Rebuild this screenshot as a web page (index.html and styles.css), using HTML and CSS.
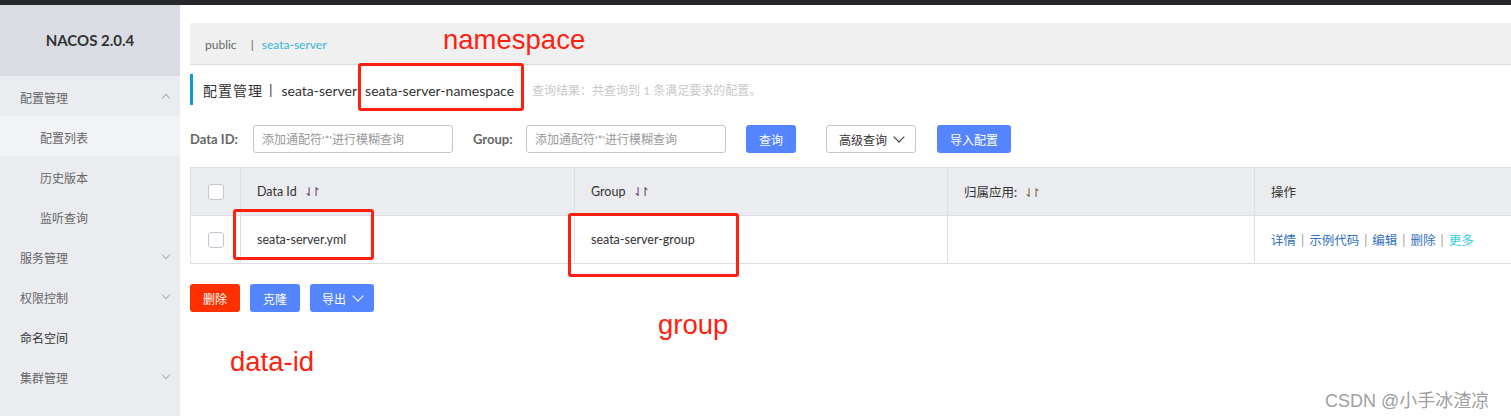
FILE: index.html
```html
<!DOCTYPE html>
<html lang="zh-CN">
<head>
    <meta charset="UTF-8">
    <title>Nacos 配置列表</title>
    <link rel="stylesheet" href="styles.css">
</head>
<body>
    <div class="topbar"></div>
    <div class="layout">
        <div class="sidebar">
            <div class="logo">NACOS 2.0.4</div>
            <ul class="menu">
                <li class="group open">配置管理<span class="arrow up"></span></li>
                <li class="sub active">配置列表</li>
                <li class="sub">历史版本</li>
                <li class="sub">监听查询</li>
                <li class="group">服务管理<span class="arrow"></span></li>
                <li class="group">权限控制<span class="arrow"></span></li>
                <li class="group plain">命名空间</li>
                <li class="group">集群管理<span class="arrow"></span></li>
            </ul>
        </div>

        <div class="main">
            <div class="ns-bar">
                <span class="ns">public</span>
                <span class="ns-sep">|</span>
                <span class="ns current">seata-server</span>
            </div>

            <div class="title-row">
                <span class="title-cn">配置管理</span>
                <span class="title-sep">|</span>
                <span class="title-en">seata-server</span>
                <span class="title-en ns-name">seata-server-namespace</span>
                <span class="result">查询结果：共查询到 1 条满足要求的配置。</span>
            </div>

            <div class="search-row">
                <label>Data ID:</label>
                <input class="field" type="text" placeholder="添加通配符'*'进行模糊查询">
                <label class="gap">Group:</label>
                <input class="field" type="text" placeholder="添加通配符'*'进行模糊查询">
                <button class="btn primary query">查询</button>
                <button class="btn normal adv">高级查询 <span class="chev"></span></button>
                <button class="btn primary import">导入配置</button>
            </div>

            <table class="grid">
                <thead>
                    <tr>
                        <th class="col-check"><span class="checkbox"></span></th>
                        <th class="col-id">Data Id <span class="sort">⇃↾</span></th>
                        <th class="col-group">Group <span class="sort">⇃↾</span></th>
                        <th class="col-app">归属应用: <span class="sort">⇃↾</span></th>
                        <th>操作</th>
                    </tr>
                </thead>
                <tbody>
                    <tr>
                        <td class="col-check"><span class="checkbox"></span></td>
                        <td>seata-server.yml</td>
                        <td>seata-server-group</td>
                        <td></td>
                        <td class="ops">
                            <a href="#">详情</a><i>|</i><a href="#">示例代码</a><i>|</i><a href="#">编辑</a><i>|</i><a href="#">删除</a><i>|</i><a href="#" class="more">更多</a>
                        </td>
                    </tr>
                </tbody>
            </table>

            <div class="batch">
                <button class="btn danger">删除</button>
                <button class="btn primary">克隆</button>
                <button class="btn primary">导出 <span class="chev light"></span></button>
            </div>
        </div>
    </div>

    <!-- 红色标注 -->
    <div class="note-text t-ns">namespace</div>
    <div class="note-box b-ns"></div>
    <div class="note-box b-id"></div>
    <div class="note-box b-group"></div>
    <div class="note-text t-group">group</div>
    <div class="note-text t-id">data-id</div>
    <div class="watermark">CSDN @小手冰渣凉</div>
</body>
</html>
```

FILE: styles.css
```css
body {
    margin: 0;
    font-family: Lato, "Noto Sans CJK SC", sans-serif;
    font-size: 12px;
    color: #333;
    background-color: #fff;
    height: 416px;
    overflow: hidden;
    position: relative;
}
.topbar {
    height: 5px;
    background-color: #25272b;
}
.layout {
    display: flex;
    height: 411px;
}
.sidebar {
    width: 180px;
    flex-shrink: 0;
    background-color: #eaecf0;
}
.logo {
    height: 71px;
    line-height: 71px;
    background-color: #d9dde3;
    text-align: center;
    font-weight: bold;
    font-size: 15px;
    color: #333;
}
.menu {
    list-style-type: none;
    margin: 0;
    padding: 0;
}
.menu li {
    height: 40px;
    line-height: 46px;
    font-size: 12px;
    color: #666;
    position: relative;
}
.menu .group {
    padding-left: 20px;
}
.menu .sub {
    padding-left: 40px;
}
.menu .active {
    background-color: #f2f3f7;
}
.menu .plain {
    color: #333;
}
.arrow {
    position: absolute;
    right: 11px;
    top: 16px;
    width: 5px;
    height: 5px;
    border-right: 1px solid #aaa;
    border-bottom: 1px solid #aaa;
    transform: rotate(45deg);
}
.arrow.up {
    top: 19px;
    transform: rotate(-135deg);
}
.main {
    flex: 1;
    padding: 18px 0 0 10px;
    min-width: 0;
}
.ns-bar {
    height: 41px;
    line-height: 44px;
    background-color: #f0f0f0;
    border-bottom: 1px solid #dcdcdc;
    padding-left: 15px;
    font-size: 12px;
}
.ns {
    color: #666;
}
.ns-sep {
    color: #666;
    margin: 0 5px 0 11px;
}
.ns.current {
    color: #33b6d8;
}
.title-row {
    margin-top: 9px;
    height: 31px;
    display: flex;
    align-items: center;
    border-left: 3px solid #0f9bd7;
    padding-left: 10px;
    font-size: 14px;
    color: #333;
}
.title-cn {
    letter-spacing: 1px;
    padding-top: 1px;
}
.title-sep {
    margin: 0 9px 0 6px;
}
.title-en {
    font-size: 14px;
    padding-top: 1px;
}
.ns-name {
    margin-left: 8px;
}
.result {
    margin-left: 18px;
    font-size: 12px;
    color: #c8c8c8;
}
.search-row {
    margin-top: 20px;
    display: flex;
    align-items: center;
    height: 28px;
}
.search-row label {
    font-size: 13px;
    font-weight: bold;
    color: #666;
    width: 63px;
}
.search-row label.gap {
    margin-left: 20px;
    width: 53px;
}
.field {
    box-sizing: border-box;
    width: 200px;
    height: 28px;
    border: 1px solid #c4c6cf;
    border-radius: 3px;
    padding: 0 8px;
    font-family: inherit;
    font-size: 12px;
}
.field::placeholder {
    color: #999;
}
.btn {
    box-sizing: border-box;
    height: 28px;
    border: none;
    border-radius: 3px;
    padding: 0 12px;
    font-family: inherit;
    font-size: 12px;
    color: #fff;
    display: inline-flex;
    align-items: center;
    gap: 5px;
}
.btn.primary {
    background-color: #5584ff;
}
.btn.danger {
    background-color: #ff3000;
}
.btn.normal {
    background-color: #fff;
    border: 1px solid #c4c6cf;
    color: #333;
}
.query {
    margin-left: 20px;
    width: 50px;
    justify-content: center;
}
.adv {
    margin-left: 30px;
    width: 90px;
    justify-content: center;
}
.import {
    margin-left: 21px;
    width: 74px;
    justify-content: center;
}
.chev {
    width: 7px;
    height: 7px;
    border-right: 1px solid #333;
    border-bottom: 1px solid #333;
    transform: rotate(45deg);
    margin: -4px 0 0 3px;
}
.chev.light {
    border-color: #fff;
    border-width: 0 1.5px 1.5px 0;
}
.grid {
    margin-top: 14px;
    border-collapse: collapse;
    width: 1340px;
    table-layout: fixed;
}
.grid th, .grid td {
    border: 1px solid #dcdee3;
    text-align: left;
    padding: 0 16px;
    font-size: 12.5px;
    color: #333;
}
.grid th {
    height: 47px;
    background-color: #ebecf0;
    font-weight: normal;
}
.grid td {
    height: 47px;
}
.col-check {
    width: 17px;
}
.grid th.col-check, .grid td.col-check {
    text-align: center;
}
.col-id {
    width: 301px;
}
.col-group {
    width: 340px;
}
.col-app {
    width: 274px;
}
.checkbox {
    display: inline-block;
    width: 14px;
    height: 14px;
    border: 1px solid #c4c6cf;
    border-radius: 3px;
    background-color: #fff;
    vertical-align: middle;
}
.sort {
    color: #6a3e6a;
    font-size: 12px;
    margin-left: 4px;
    letter-spacing: -3px;
}
.col-app .sort {
    color: #7a6a3a;
}
.ops a {
    color: #2f6fc0;
    text-decoration: none;
}
.ops a.more {
    color: #33ccdd;
}
.ops i {
    font-style: normal;
    color: #999;
    margin: 0 5px;
}
.batch {
    margin-top: 20px;
    display: flex;
    gap: 10px;
}
.batch .btn {
    justify-content: center;
    min-width: 50px;
}
/* 标注 */
.note-box {
    position: absolute;
    border: 3px solid #ff1f10;
    border-radius: 3px;
    box-sizing: border-box;
}
.b-ns {
    left: 358px;
    top: 63px;
    width: 166px;
    height: 48px;
}
.b-id {
    left: 233px;
    top: 209px;
    width: 141px;
    height: 51px;
}
.b-group {
    left: 568px;
    top: 213px;
    width: 171px;
    height: 64px;
}
.note-text {
    position: absolute;
    font-family: "Liberation Sans", "Noto Sans", sans-serif;
    font-size: 27.5px;
    color: #ff1f10;
    line-height: 1;
}
.t-ns {
    left: 443px;
    top: 26px;
}
.t-group {
    left: 658px;
    top: 311px;
}
.t-id {
    left: 230px;
    top: 348px;
}
.watermark {
    position: absolute;
    left: 1325px;
    top: 386px;
    font-size: 18px;
    color: #a0a0a0;
    font-family: "Liberation Sans", "Noto Sans CJK SC", sans-serif;
    text-shadow: 0 0 1px #fff;
}
```
